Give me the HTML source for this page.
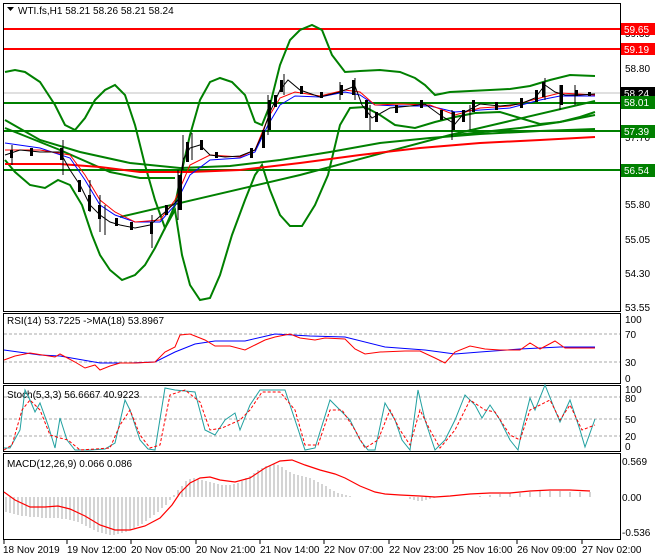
<!DOCTYPE html>
<html><head><meta charset="utf-8"><style>
body{margin:0;background:#fff;}
svg{display:block;font-family:"Liberation Sans",sans-serif;font-size:10px;}
</style></head><body>
<svg width="660" height="560" viewBox="0 0 660 560" xmlns="http://www.w3.org/2000/svg">
<rect width="660" height="560" fill="#fff"/>
<rect x="3.5" y="3.5" width="617" height="308" fill="none" stroke="#000"/>
<rect x="3.5" y="313.5" width="617" height="70" fill="none" stroke="#000"/>
<rect x="3.5" y="385.5" width="617" height="66" fill="none" stroke="#000"/>
<rect x="3.5" y="453.5" width="617" height="86" fill="none" stroke="#000"/>
<line x1="4" y1="93" x2="620" y2="93" stroke="#c0c0c0"/>
<line x1="4" y1="29" x2="620" y2="29" stroke="#f00" stroke-width="2"/>
<line x1="4" y1="49" x2="620" y2="49" stroke="#f00" stroke-width="2"/>
<line x1="4" y1="103" x2="620" y2="103" stroke="#008000" stroke-width="2"/>
<line x1="4" y1="131" x2="620" y2="131" stroke="#008000" stroke-width="2"/>
<line x1="4" y1="170" x2="620" y2="170" stroke="#008000" stroke-width="2"/>
<g fill="none" stroke="#008000" stroke-width="2">
<polyline points="5,72 15,70 25,72 40,82 55,105 65,125 75,130 85,118 95,100 105,90 115,85 125,95 135,125 145,165 155,200 165,228 175,205 182,170 190,135 200,100 210,82 220,78 232,82 245,95 255,122 262,125 270,105 280,65 290,40 300,30 312,25 322,30 332,55 345,72 360,71 380,70 400,72 415,78 425,85 435,95 450,92 470,91 490,90 510,89 530,86 550,80 570,75 595,76"/>
<polyline points="5,160 15,172 30,185 45,188 58,180 70,185 82,205 92,235 100,255 110,270 122,280 135,275 145,265 155,248 165,228 175,210 182,255 190,285 200,300 210,298 220,275 232,235 245,200 255,175 262,165 270,190 280,215 290,226 302,226 315,205 328,175 340,125 350,108 365,107 380,115 395,125 415,128 435,122 455,117 475,113 500,112 520,118 540,124 560,122 580,117 595,112"/>
<polyline points="5,120 40,140 80,152 130,163 180,168 230,166 280,160 330,152 380,143 430,138 480,134 540,131 595,129"/>
<polyline points="120,217 300,175 450,135 595,101"/>
<polyline points="5,128 60,150 110,172 140,178 175,178"/>
<polyline points="455,135 520,128 560,122 595,115"/>
</g>
<polyline fill="none" stroke="#f00" stroke-width="2" points="5,164 60,164 100,167 140,172 190,172 240,170 300,163 360,155 420,148 480,143 540,140 595,137"/>
<polyline fill="none" stroke="#00f" stroke-width="1" points="5,143 40,148 70,158 85,180 100,205 115,215 135,222 160,222 175,205 190,175 210,160 240,158 255,152 268,125 280,105 295,96 320,97 345,92 360,95 375,105 400,106 430,106 455,112 480,110 510,108 540,100 560,96 595,96"/>
<polyline fill="none" stroke="#f00" stroke-width="1" points="5,150 40,150 70,155 85,175 100,200 115,212 135,222 160,220 175,200 190,165 210,155 240,157 255,150 268,118 280,98 295,92 320,96 345,90 360,92 375,105 400,104 430,105 455,115 480,108 510,106 540,98 560,93 595,95"/>
<!-- price wicks -->
<polyline fill="none" stroke="#000" stroke-width="1" points="5,155 20,150 40,152 60,152 70,170 80,185 90,205 100,215 110,222 120,225 135,228 150,225 165,212 178,200 183,160 190,148 200,145 210,155 225,157 240,156 255,150 262,135 270,112 280,90 288,80 300,90 320,97 340,92 355,86 362,105 372,118 390,108 410,106 425,104 440,115 455,124 465,112 480,104 500,106 520,104 535,98 545,85 555,92 565,95 580,95 595,94"/>
<g stroke="#000" stroke-width="1">
<path d="M12,145V165 M63,140V175 M90,180V212 M100,195V232 M105,205V235 M152,215V248 M178,170V220 M183,135V170 M192,133V160 M268,95V135 M284,74V95 M340,82V100 M355,78V100 M370,105V130 M452,110V140 M470,105V130 M545,78V100 M560,85V110 M575,85V105"/>
</g>
<g fill="#000">
<rect x="10" y="150" width="3" height="8"/><rect x="30" y="148" width="3" height="8"/><rect x="60" y="148" width="3" height="12"/>
<rect x="78" y="180" width="3" height="12"/><rect x="88" y="195" width="3" height="16"/><rect x="98" y="205" width="3" height="14"/>
<rect x="115" y="218" width="3" height="8"/><rect x="130" y="222" width="3" height="8"/><rect x="150" y="222" width="3" height="12"/>
<rect x="165" y="205" width="3" height="10"/><rect x="178" y="175" width="4" height="35"/><rect x="186" y="142" width="3" height="20"/>
<rect x="200" y="140" width="3" height="10"/><rect x="215" y="152" width="3" height="6"/><rect x="250" y="148" width="3" height="10"/>
<rect x="262" y="130" width="3" height="18"/><rect x="268" y="100" width="3" height="30"/><rect x="274" y="95" width="3" height="12"/>
<rect x="280" y="80" width="3" height="12"/><rect x="300" y="86" width="3" height="8"/><rect x="320" y="92" width="3" height="6"/>
<rect x="340" y="85" width="3" height="10"/><rect x="352" y="80" width="3" height="15"/><rect x="365" y="100" width="3" height="18"/>
<rect x="375" y="112" width="3" height="10"/><rect x="395" y="105" width="3" height="8"/><rect x="420" y="100" width="3" height="8"/>
<rect x="440" y="110" width="3" height="10"/><rect x="452" y="112" width="3" height="18"/><rect x="462" y="110" width="3" height="12"/>
<rect x="472" y="100" width="3" height="12"/><rect x="495" y="102" width="3" height="8"/><rect x="520" y="98" width="3" height="10"/>
<rect x="535" y="90" width="3" height="12"/><rect x="542" y="82" width="3" height="15"/><rect x="560" y="85" width="3" height="20"/>
<rect x="575" y="90" width="3" height="6"/><rect x="588" y="92" width="3" height="4"/>
</g>
<polygon points="7,7 14,7 10.5,11" fill="#000"/>
<text x="18" y="14" fill="#000">WTI.fs,H1  58.21 58.26 58.21 58.24</text>
<g fill="#000">
<text x="625" y="37">59.35</text>
<text x="625" y="72">58.80</text>
<text x="625" y="141">57.70</text>
<text x="625" y="208">55.80</text>
<text x="625" y="243">55.05</text>
<text x="625" y="277">54.30</text>
<text x="625" y="311">53.55</text>
</g>
<rect x="621" y="23" width="34" height="12" fill="#f00"/><text x="624" y="33" fill="#fff">59.65</text>
<rect x="621" y="43" width="34" height="12" fill="#f00"/><text x="624" y="53" fill="#fff">59.19</text>
<rect x="621" y="87" width="34" height="12" fill="#000"/><text x="624" y="97" fill="#fff">58.24</text>
<rect x="621" y="96" width="34" height="13" fill="#008000"/><text x="624" y="106" fill="#fff">58.01</text>
<rect x="621" y="125" width="34" height="13" fill="#008000"/><text x="624" y="135" fill="#fff">57.39</text>
<rect x="621" y="164" width="34" height="13" fill="#008000"/><text x="624" y="174" fill="#fff">56.54</text>
<g stroke="#aaa" stroke-dasharray="3,2"><line x1="4" y1="334" x2="620" y2="334"/><line x1="4" y1="362" x2="620" y2="362"/></g>
<text x="7" y="324" fill="#000">RSI(14) 53.7225  -&gt;MA(18) 53.8967</text>
<polyline fill="none" stroke="#00f" points="4,350 40,355 60,356 100,363 130,363 155,362 175,352 195,344 215,341 245,341 275,334 310,336 345,337 385,347 425,350 455,354 480,352 520,349 560,347 595,347"/>
<polyline fill="none" stroke="#f00" points="4,360 15,356 30,353 55,357 60,354 75,362 85,368 95,365 100,370 110,366 120,363 135,363 155,362 165,352 175,347 180,335 190,334 205,340 215,346 230,346 245,350 255,345 265,340 275,337 290,334 300,338 315,340 325,338 345,339 355,349 365,354 380,352 405,351 420,351 435,358 445,363 455,352 470,346 485,349 500,350 520,350 530,343 540,349 555,341 565,348 580,348 595,348"/>
<g fill="#000"><text x="625" y="323">100</text><text x="625" y="338">70</text><text x="625" y="366">30</text><text x="625" y="382">0</text></g>
<g stroke="#aaa" stroke-dasharray="3,2"><line x1="4" y1="397" x2="620" y2="397"/><line x1="4" y1="419" x2="620" y2="419"/><line x1="4" y1="436" x2="620" y2="436"/></g>
<text x="7" y="398" fill="#000">Stoch(5,3,3) 56.6667 40.9223</text>
<polyline fill="none" stroke="#20a0a0" points="4,448 10,448 20,430 25,390 30,400 35,412 40,403 48,425 55,448 60,418 67,440 75,450 90,450 105,449 115,443 125,400 130,410 140,440 148,449 155,450 165,388 175,390 195,392 205,430 215,435 225,420 235,413 240,430 250,405 260,390 285,390 295,420 305,450 315,448 330,400 340,410 350,420 360,440 368,450 375,450 385,403 395,420 402,440 410,450 418,390 425,420 435,450 445,440 455,420 465,395 475,405 482,418 490,405 500,420 510,440 518,450 522,430 530,398 535,410 545,385 555,410 560,422 570,400 580,430 585,447 595,419"/>
<polyline fill="none" stroke="#f00" stroke-dasharray="3,2" points="4,450 12,445 22,410 30,400 40,410 50,435 60,438 68,440 80,450 110,448 120,425 130,410 140,435 150,448 160,445 170,395 185,390 200,402 210,430 222,428 240,420 250,410 262,392 280,392 295,410 305,445 318,445 330,410 342,410 355,430 365,448 378,440 390,410 400,430 410,445 420,410 430,430 440,448 455,430 470,400 485,410 495,412 510,435 520,440 530,410 540,405 550,400 560,420 570,405 582,430 595,425"/>
<g fill="#000"><text x="625" y="393">100</text><text x="625" y="402">80</text><text x="625" y="423">50</text><text x="625" y="440">20</text><text x="625" y="450">0</text></g>
<text x="7" y="467" fill="#000">MACD(12,26,9) 0.066 0.086</text>
<g stroke="#aaa" stroke-width="1">
<path d="M6,497V512 M10,497V513 M14,497V514 M18,497V515 M22,497V516 M26,497V516 M30,497V517 M34,497V517 M38,497V517 M42,497V518 M46,497V518 M50,497V518 M54,497V518 M58,497V518 M62,497V519 M66,497V519 M70,497V520 M74,497V521 M78,497V522 M82,497V524 M86,497V526 M90,497V528 M94,497V530 M98,497V532 M102,497V533 M106,497V534 M110,497V535 M114,497V535 M118,497V534 M122,497V533 M126,497V532 M130,497V530 M134,497V528 M138,497V526 M142,497V524 M146,497V521 M150,497V518 M154,497V515 M158,497V512 M162,497V508 M166,497V505 M170,497V500 M174,497V495 M178,497V490 M182,497V486 M186,497V481 M190,497V479 M194,497V478 M198,497V479 M202,497V480 M206,497V481 M210,497V482 M214,497V483 M218,497V484 M222,497V485 M226,497V485 M230,497V485 M234,497V484 M238,497V483 M242,497V481 M246,497V478 M250,497V476 M254,497V473 M258,497V470 M262,497V468 M266,497V466 M270,497V465 M274,497V464 M278,497V465 M282,497V467 M286,497V470 M290,497V472 M294,497V474 M298,497V475 M302,497V476 M306,497V477 M310,497V478 M314,497V480 M318,497V482 M322,497V484 M326,497V486 M330,497V489 M334,497V491 M338,497V493 M342,497V494 M346,497V495 M350,497V496 M354,497V497 M410,497V499 M414,497V500 M418,497V501 M422,497V501 M426,497V500 M430,497V499 M434,497V498 M438,497V497 M480,497V496 M490,497V495 M500,497V494 M510,497V493 M520,497V493 M530,497V492 M540,497V491 M550,497V491 M560,497V491 M570,497V492 M580,497V492 M590,497V492"/>
</g>
<polyline fill="none" stroke="#f00" stroke-width="1.2" points="4,492 15,500 30,507 45,507 58,506 70,509 85,516 100,525 115,530 130,530 145,526 160,518 172,505 180,493 190,483 200,478 210,477 220,480 235,482 250,478 265,468 280,461 292,460 305,465 320,470 335,474 345,478 360,486 375,492 385,494 400,495 420,496 435,497 450,496 470,494 490,493 510,493 530,491 550,490 570,490 590,491"/>
<g fill="#000"><text x="622" y="465">0.569</text><text x="622" y="501">0.00</text><text x="622" y="536">-0.536</text></g>
<g stroke="#000"><path d="M4,540V544 M67,540V544 M131,540V544 M196,540V544 M260,540V544 M324,540V544 M389,540V544 M453,540V544 M517,540V544 M582,540V544"/></g>
<g fill="#000">
<text x="3" y="553">18 Nov 2019</text><text x="67" y="553">19 Nov 12:00</text><text x="131" y="553">20 Nov 05:00</text><text x="196" y="553">20 Nov 21:00</text><text x="260" y="553">21 Nov 14:00</text><text x="324" y="553">22 Nov 07:00</text><text x="389" y="553">22 Nov 23:00</text><text x="453" y="553">25 Nov 16:00</text><text x="517" y="553">26 Nov 09:00</text><text x="582" y="553">27 Nov 02:00</text>
</g>
</svg>
</body></html>
